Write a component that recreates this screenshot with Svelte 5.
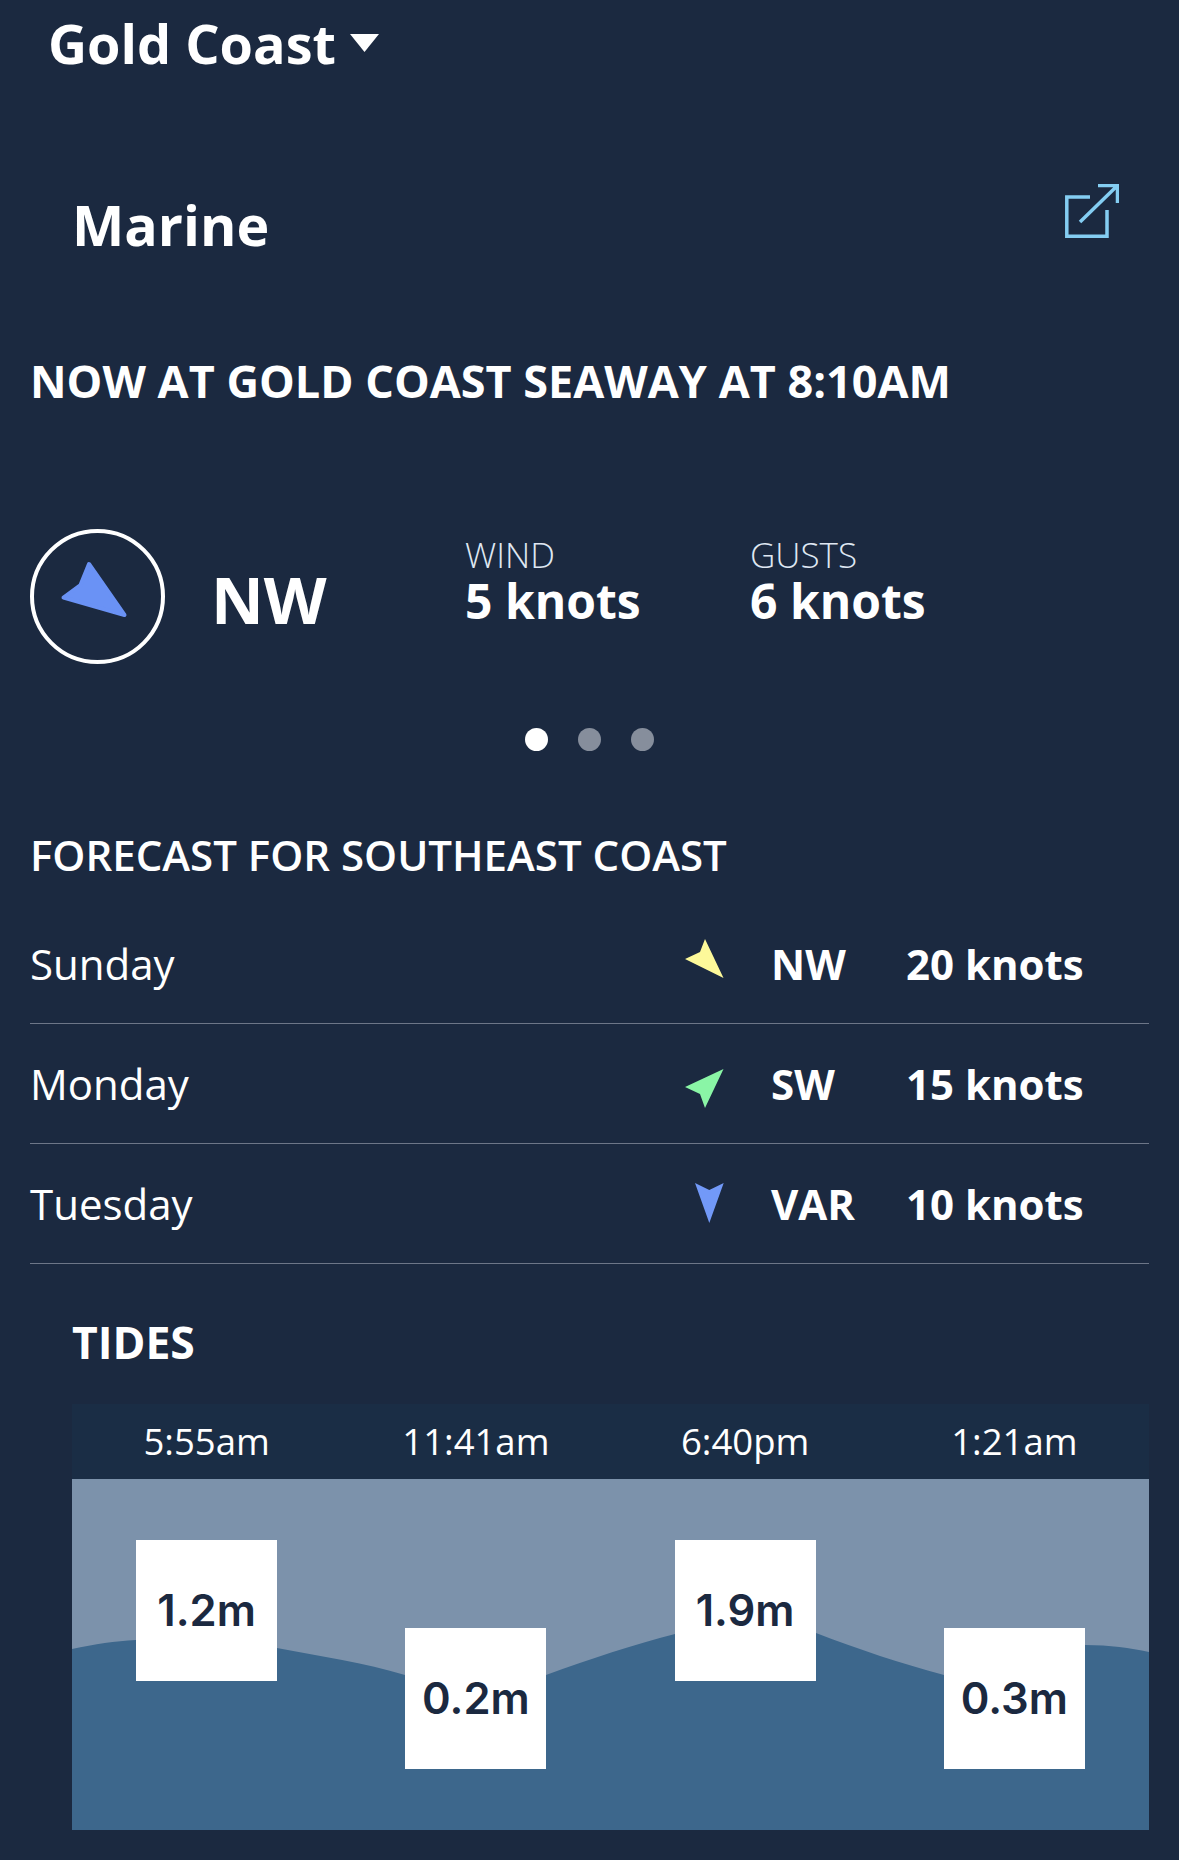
<script>
  const forecast = [
    { day: 'Sunday', dir: 'NW', speed: '20 knots', color: '#fdf99a', points: '705,940 723.5,979 685,960 700,953' },
    { day: 'Monday', dir: 'SW', speed: '15 knots', color: '#8af5a6', points: '723.5,1070 705,1109 700,1095 685,1088' },
    { day: 'Tuesday', dir: 'VAR', speed: '10 knots', color: '#7299f8', points: '695,1184 709.3,1191 723.7,1184 709.3,1224' }
  ];
  const offsets = [940, 1060, 1180];
  const tides = [
    { time: '5:55am', height: '1.2m', level: 'high' },
    { time: '11:41am', height: '0.2m', level: 'low' },
    { time: '6:40pm', height: '1.9m', level: 'high' },
    { time: '1:21am', height: '0.3m', level: 'low' }
  ];
</script>

<main class="page">
  <header class="location">
    <h1>Gold Coast</h1>
    <svg class="caret" viewBox="0 0 28 18" preserveAspectRatio="none" aria-hidden="true"><path d="M0 0H28L14 18Z" /></svg>
  </header>

  <section class="title-row">
    <h2>Marine</h2>
    <svg class="external" viewBox="0 0 54 54" aria-hidden="true">
      <path d="M25 13H1.8V52.2H42V26" />
      <path d="M15 38L52 2M33 1.5H52.5V19" />
    </svg>
  </section>

  <h3 class="now">NOW AT GOLD COAST SEAWAY AT 8:10AM</h3>

  <section class="current">
    <svg class="compass" viewBox="0 0 135 135" aria-hidden="true">
      <circle cx="67.5" cy="67.5" r="65.5" />
      <path class="needle" d="M59 35L94.5 86 33.5 68.5 50.5 56Z" />
    </svg>
    <div class="dir">NW</div>
    <div class="stat wind"><span>WIND</span><strong>5 knots</strong></div>
    <div class="stat gusts"><span>GUSTS</span><strong>6 knots</strong></div>
  </section>

  <div class="dots">
    <i class="on"></i><i></i><i></i>
  </div>

  <h3 class="forecast-title">FORECAST FOR SOUTHEAST COAST</h3>

  <ul class="forecast">
    {#each forecast as row, i}
      <li>
        <span class="day">{row.day}</span>
        <svg class="arrow" viewBox="680 {offsets[i]} 50 50" aria-hidden="true">
          <polygon points={row.points} fill={row.color} />
        </svg>
        <strong class="fdir">{row.dir}</strong>
        <strong class="speed">{row.speed}</strong>
      </li>
    {/each}
  </ul>

  <section class="tides">
    <h3>TIDES</h3>
    <div class="times">
      {#each tides as t}<span>{t.time}</span>{/each}
    </div>
    <div class="chart">
      <svg class="wave" viewBox="72 1479 1077 351" preserveAspectRatio="none" aria-hidden="true">
        <path d="M72 1649C95 1644 115 1641 136 1640L277 1648C320 1656 365 1663 405 1675L546 1675C590 1659 635 1644 675 1634L816 1633C860 1650 900 1663 944 1675L1085 1645C1110 1645 1130 1648 1149 1652V1830H72Z" />
      </svg>
      {#each tides as t}
        <div class="cell"><div class="box {t.level}">{t.height}</div></div>
      {/each}
    </div>
  </section>
</main>

<style>
  :global(body) { margin: 0; background: #1b2940; }
  .page {
    width: 1179px; height: 1860px; overflow: hidden; box-sizing: border-box;
    background: #1b2940; color: #fff;
    font-family: "Open Sans", "Noto Sans", sans-serif;
  }
  h1, h2, h3, ul { margin: 0; padding: 0; }
  .location { display: flex; align-items: flex-start; padding: 8px 0 0 48px; height: 74px; }
  h1 { font-size: 54px; line-height: 70px; font-weight: 700; }
  .caret { width: 29px; height: 18px; margin: 26px 0 0 14px; fill: #fff; }
  .title-row { display: flex; justify-content: space-between; align-items: center; padding: 98px 60px 0 72px; height: 90px; }
  h2 { font-size: 55.5px; line-height: 72px; font-weight: 700; }
  .external { width: 54px; height: 54px; fill: none; stroke: #84cdf2; stroke-width: 3.5; margin-bottom: 28px; }
  .now { font-size: 45px; line-height: 60px; font-weight: 700; padding: 81px 0 0 30px; }
  .current { display: flex; align-items: flex-start; padding: 118px 0 0 30px; height: 135px; }
  .compass { width: 135px; height: 135px; }
  .compass circle { fill: none; stroke: #fff; stroke-width: 4; }
  .needle { fill: #6a92f5; stroke: #6a92f5; stroke-width: 4; stroke-linejoin: round; }
  .dir { font-size: 65px; line-height: 90px; font-weight: 700; margin: 25px 0 0 46px; width: 254px; }
  .stat { display: flex; flex-direction: column; width: 285px; margin-top: 6px; }
  .stat span { font-size: 35px; line-height: 40px; font-weight: 300; color: #dfe7f2; }
  .stat strong { font-size: 48px; line-height: 52px; font-weight: 700; }
  .dots { display: flex; justify-content: center; gap: 30px; padding: 64px 0 0 0; }
  .dots i { width: 23px; height: 23px; border-radius: 50%; background: #868e9c; }
  .dots .on { background: #fff; }
  .forecast-title { font-size: 42px; line-height: 54px; font-weight: 600; padding: 77px 0 0 30px; }
  .forecast { list-style: none; margin: 22px 30px 0; }
  li { display: flex; align-items: center; height: 120px; border-bottom: 1px solid #6d7688; box-sizing: border-box; }
  .day { font-size: 42px; font-weight: 400; width: 650px; }
  .arrow { width: 50px; height: 50px; margin-right: 41px; }
  .fdir { font-size: 42px; font-weight: 700; width: 135px; }
  .speed { font-size: 42px; font-weight: 700; }
  .tides { padding: 0 30px 0 72px; }
  .tides h3 { font-size: 44.5px; line-height: 60px; font-weight: 700; padding: 48px 0 0; height: 92px; }
  .times { display: grid; grid-template-columns: repeat(4, 1fr); height: 75px; align-items: center; background: #1a2d45; font-size: 36.5px; text-align: center; }
  .times span { margin-top: -2px; }
  .chart { position: relative; display: grid; grid-template-columns: repeat(4, 1fr); height: 351px; background: #7c92ab; }
  .wave { position: absolute; inset: 0; width: 100%; height: 100%; fill: #3d678c; }
  .cell { position: relative; display: flex; justify-content: center; }
  .box { width: 141px; height: 141px; background: #fff; color: #1b2940; display: flex; align-items: center; justify-content: center; font-family: Inter, "Liberation Sans", sans-serif; font-size: 43.5px; font-weight: 600; padding-bottom: 2px; box-sizing: border-box; }
  .box.high { margin-top: 61px; }
  .box.low { margin-top: 149px; }
</style>
